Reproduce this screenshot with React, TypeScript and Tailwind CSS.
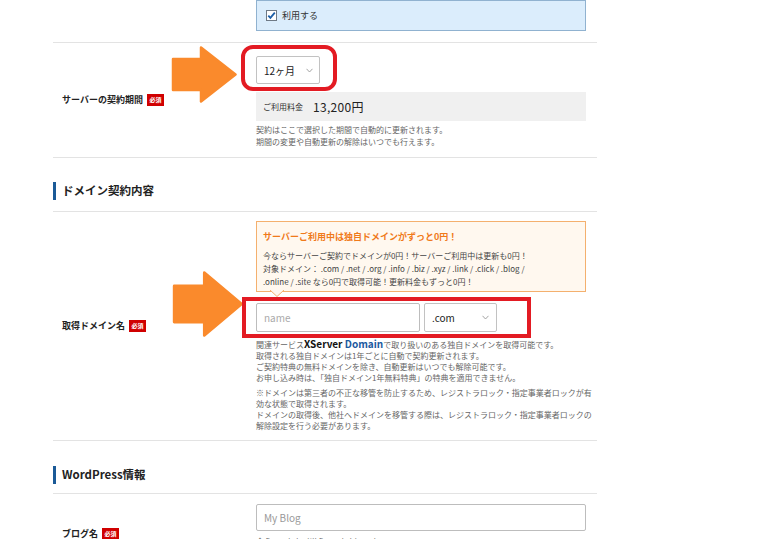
import React from "react";

const Badge = () => (
  <span className="ml-[4px] inline-flex h-[12px] w-[17px] items-center justify-center bg-[#d00000] text-[6px] font-bold leading-none text-white">
    必須
  </span>
);

const Chevron = () => (
  <svg width="7" height="5" viewBox="0 0 7 5" className="shrink-0">
    <polyline points="0.5,0.8 3.5,4 6.5,0.8" fill="none" stroke="#9a9a9a" strokeWidth="0.9" />
  </svg>
);

const Arrow = ({ className }: { className: string }) => (
  <svg viewBox="0 0 66 57" preserveAspectRatio="none" className={className}>
    <path
      d="M2,13 H30 V1.5 L64.5,28.5 L30,55.5 V44 H2 Z"
      fill="#fa8a2c"
      stroke="#fa8a2c"
      strokeWidth="2.5"
      strokeLinejoin="round"
    />
  </svg>
);

export default function App() {
  return (
    <div className="relative h-[539px] w-[780px] overflow-hidden bg-white font-['Noto_Sans_CJK_JP',sans-serif] text-[#222]">
      <div className="ml-[53px] w-[544px]">
        {/* row 0 */}
        <div className="flex border-b border-[#e3e3e3] pb-[11px]">
          <div className="w-[203px]" />
          <div className="flex h-[31px] w-[330px] items-center gap-[5px] border border-[#90b2d0] bg-[#dbedfc] pl-[9px]">
            <svg width="11" height="11" viewBox="0 0 11 11">
              <rect x="0.5" y="0.5" width="10" height="10" fill="#fff" stroke="#6f7a86" />
              <polyline points="2.3,5.6 4.4,7.8 8.8,2.6" fill="none" stroke="#1d5fa8" strokeWidth="1.8" />
            </svg>
            <span className="text-[9px] leading-none text-[#333]">利用する</span>
          </div>
        </div>

        {/* row 1 */}
        <div className="flex items-center border-b border-[#e3e3e3]">
          <div className="flex w-[203px] items-center pl-[9px] text-[9px] font-bold">
            サーバーの契約期間
            <Badge />
          </div>
          <div className="w-[330px] pt-[13px] pb-[9px]">
            <div className="flex h-[28px] w-[64px] items-center justify-between rounded-[2px] border border-[#c2c2c2] pr-[6px] pl-[7px] text-[10px]">
              <span>12ヶ月</span>
              <Chevron />
            </div>
            <div className="mt-[8px] flex h-[29px] items-center bg-[#f0f0f0] pl-[7px]">
              <span className="text-[8px] text-[#333]">ご利用料金</span>
              <span className="ml-[10px] text-[12px] tracking-[0.3px] text-[#222]">13,200円</span>
            </div>
            <div className="mt-[3px] text-[8px] leading-[12px] text-[#666]">
              <p>契約はここで選択した期間で自動的に更新されます。</p>
              <p>期間の変更や自動更新の解除はいつでも行えます。</p>
            </div>
          </div>
        </div>

        {/* section header */}
        <div className="border-b border-[#e3e3e3] pt-[24px] pb-[11px]">
          <div className="flex h-[18px] items-center border-l-[3px] border-[#1b5a97] pl-[6px] text-[11.5px] font-bold">
            ドメイン契約内容
          </div>
        </div>

        {/* row 2 */}
        <div className="flex items-center border-b border-[#e3e3e3]">
          <div className="flex w-[203px] items-center pl-[9px] text-[9px] font-bold">
            取得ドメイン名
            <Badge />
          </div>
          <div className="w-[330px] pt-[9px] pb-[9px]">
            <div className="relative border border-[#f4b06e] bg-[#fff8ef] px-[6px] pt-[9px] pb-[3px]">
              <p className="text-[9px] font-bold leading-[12px] text-[#f07a1a]">
                サーバーご利用中は独自ドメインがずっと0円！
              </p>
              <div className="mt-[6px] whitespace-nowrap text-[8px] leading-[13px] text-[#444]">
                <p>今ならサーバーご契約でドメインが0円！サーバーご利用中は更新も0円！</p>
                <p>対象ドメイン： .com / .net / .org / .info / .biz / .xyz / .link / .click / .blog /</p>
                <p>.online / .site なら0円で取得可能！更新料金もずっと0円！</p>
              </div>
              <svg width="14" height="7" viewBox="0 0 14 7" className="absolute -bottom-[6px] left-[13px]">
                <polygon points="0,0 7,6.5 14,0" fill="#fff8ef" />
                <polyline points="0,0 7,6.5 14,0" fill="none" stroke="#f4b06e" strokeWidth="1" />
              </svg>
            </div>
            <div className="mt-[11px] flex gap-[4px]">
              <div className="flex h-[29px] w-[164px] items-center rounded-[2px] border border-[#bdbdbd] pl-[7px] text-[10px] text-[#aaa]">
                name
              </div>
              <div className="flex h-[29px] w-[73px] items-center justify-between rounded-[2px] border border-[#c2c2c2] pr-[7px] pl-[7px] text-[10px]">
                <span>.com</span>
                <Chevron />
              </div>
            </div>
            <div className="mt-[6px] whitespace-nowrap text-[8px] leading-[11px] text-[#666]">
              <p>
                関連サービス
                <span className="text-[10px] font-bold text-[#111]">XServer </span>
                <span className="text-[10px] font-bold text-[#1b5aa0]">Domain</span>
                で取り扱いのある独自ドメインを取得可能です。
              </p>
              <p>取得される独自ドメインは1年ごとに自動で契約更新されます。</p>
              <p>ご契約特典の無料ドメインを除き、自動更新はいつでも解除可能です。</p>
              <p>お申し込み時は、「独自ドメイン1年無料特典」の特典を適用できません。</p>
              <p className="mt-[4px]">
                ※ドメインは第三者の不正な移管を防止するため、レジストラロック・指定事業者ロックが有
              </p>
              <p>効な状態で取得されます。</p>
              <p>ドメインの取得後、他社へドメインを移管する際は、レジストラロック・指定事業者ロックの</p>
              <p>解除設定を行う必要があります。</p>
            </div>
          </div>
        </div>

        {/* section header 2 */}
        <div className="border-b border-[#e3e3e3] pt-[25px] pb-[9px]">
          <div className="flex h-[18px] items-center border-l-[3px] border-[#1b5a97] pl-[6px] text-[11.5px] font-bold">
            WordPress情報
          </div>
        </div>

        {/* row 3 */}
        <div className="flex items-center">
          <div className="flex w-[203px] items-center pl-[9px] text-[9px] font-bold">
            ブログ名
            <Badge />
          </div>
          <div className="w-[330px] pt-[10px] pb-[26px]">
            <div className="flex h-[27px] items-center rounded-[2px] border border-[#bdbdbd] pl-[7px] text-[10px] text-[#999]">
              My Blog
            </div>
            <p className="mt-[5px] text-[8px] leading-[11px] text-[#666]">全角255文字（半角255文字）以内</p>
          </div>
        </div>
      </div>

      {/* overlays: arrows and red highlight frames */}
      <Arrow className="absolute top-[46px] left-[171px] h-[57px] w-[66px]" />
      <Arrow className="absolute top-[271px] left-[172px] h-[66px] w-[71px]" />
      <div className="absolute top-[45px] left-[241px] h-[46px] w-[96px] rounded-[12px] border-4 border-[#e31b23]" />
      <div className="absolute top-[297px] left-[242px] h-[41px] w-[289px] border-4 border-[#e31b23]" />
    </div>
  );
}
